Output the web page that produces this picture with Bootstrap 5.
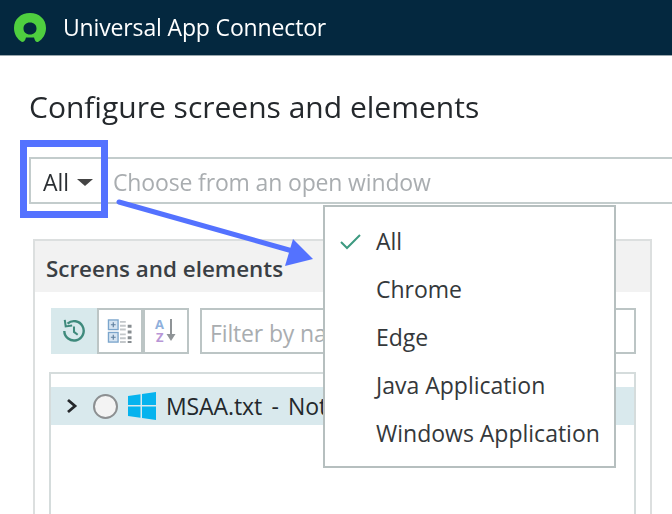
<!DOCTYPE html>
<html lang="en">
<head>
    <meta charset="UTF-8">
    <meta name="viewport" content="width=device-width, initial-scale=1">
    <title>Universal App Connector</title>
    <link href="https://cdn.jsdelivr.net/npm/bootstrap@5.3.0/dist/css/bootstrap.min.css" rel="stylesheet">
    <style>
        html, body {
          height: 514px;
          overflow: hidden;
        }
        body {
          position: relative;
          width: 672px;
          font-family: "Open Sans", "Noto Sans", sans-serif;
          color: #2b2f33;
          background: #fff;
          filter: blur(0.4px);
        }
        .app-bar {
          height: 56px;
          padding: 0 0 0 14px;
          background: #04283f;
          border-bottom: 1px solid #9aa7ad;
          gap: 17px;
        }
        .app-name {
          color: #fff;
          font-size: 23px;
          letter-spacing: -0.15px;
        }
        .app-main {
          padding: 33px 0 0 29px;
          overflow: hidden;
          height: 458px;
        }
        .page-title {
          font-size: 30px;
          font-weight: 400;
          line-height: 36px;
          margin: 0 0 32px;
          color: #24282c;
        }
        .picker {
          width: 660px;
          height: 47px;
          padding-top: 3px;
          border: 2px solid #c3cccc;
        }
        .picker-btn {
          width: 82px;
          flex-shrink: 0;
          padding: 0 0 0 12px;
          gap: 8px;
          font-size: 23px;
          color: #2b2f33;
        }
        .caret-down {
          width: 0;
          height: 0;
          border-left: 8px solid transparent;
          border-right: 8px solid transparent;
          border-top: 7px solid #444;
        }
        .picker-hint {
          font-size: 23px;
          color: #a9adb0;
          letter-spacing: -0.15px;
        }
        .el-panel {
          width: 619px;
          height: 330px;
          margin: 35px 0 0 4px;
          border: 2px solid #dcdfdf;
          border-radius: 0;
        }
        .el-panel .card-header {
          flex: 0 0 51px;
          padding: 4px 11px 0;
          background: #f2f2f2;
          border: 0;
          border-radius: 0;
          font-size: 22.4px;
          font-weight: 600;
          color: #3a3f44;
        }
        .el-panel .card-body {
          padding: 16px 14px 0 16px;
        }
        .tool-btn {
          flex: 0 0 46px;
          height: 46px;
          padding: 0;
          border: 2px solid #bcc5c5;
          border-radius: 0;
          background: #fff;
        }
        .tool-on {
          background: #d8e9ec;
          border-color: #d8e9ec;
        }
        .tool-icon {
          overflow: visible;
        }
        .filter-box {
          height: 46px;
          margin-left: 11px;
          padding: 3px 8px 0;
          border: 2px solid #bcc5c5;
          border-radius: 0;
          font-size: 23px;
          letter-spacing: -0.15px;
        }
        .filter-box::placeholder {
          color: #a9adb0;
        }
        .el-list {
          height: 200px;
          margin: 18px 0 0 -2px;
          padding-top: 13px;
          border: 2px solid #d5dcdc;
          border-bottom: 0;
          border-radius: 0;
        }
        .el-row {
          height: 38px;
          margin: 0;
          padding: 0 0 0 14px;
          background: #d9e9ed;
          border: 0;
          font-size: 23px;
          letter-spacing: -0.1px;
          word-spacing: 3.5px;
          white-space: nowrap;
          color: #23282c;
        }
        .el-radio {
          flex: 0 0 25px;
          height: 25px;
          margin: 0 9px 0 14px;
          background: #f3f3f3;
          border: 2px solid #8c8f91;
          border-radius: 50%;
        }
        .win-logo {
          margin-right: 9px;
        }
        .type-menu {
          position: absolute;
          left: 323px;
          top: 205px;
          width: 293px;
          height: 263px;
          margin: 0;
          padding: 11px 0 0;
          border: 2px solid #b6bfbf;
          border-radius: 0;
        }
        .type-menu .dropdown-item {
          position: relative;
          height: 48px;
          padding: 0 0 0 51px;
          font-size: 23px;
          line-height: 46px;
          color: #34383b;
        }
        .menu-tick {
          position: absolute;
          left: 15px;
          top: 15px;
        }
        .call-box {
          position: absolute;
          left: 20px;
          top: 140px;
          width: 88px;
          height: 78px;
          border: 7px solid #5472ff;
        }
        .call-arrow {
          position: absolute;
          left: 0;
          top: 0;
        }
    </style>
</head>
<body>
<nav class="navbar app-bar d-flex align-items-center justify-content-start flex-nowrap">
    <svg width="32" height="30" viewBox="0 0 32 30">
        <path fill-rule="evenodd" d="M8 29 C3 26 0 21 0 15 C0 6 7 0 16 0 C25 0 32 6 32 15 C32 21 29 26 24 29 C22 29.500 21 28 20 24.500 L12 24.500 C11 28 10 29 8 29 Z M16 9.500 C12 9.500 9.500 12 9.500 15.500 C9.500 19 12 21.500 16 21.500 C20 21.500 22.500 19 22.500 15.500 C22.500 12 20 9.500 16 9.500 Z" fill="#4fce3f"/>
    </svg>
    <span class="app-name">Universal App Connector</span>
</nav>

<div class="app-main">
    <h1 class="page-title">Configure screens and elements</h1>

    <div class="picker d-flex align-items-center">
        <button type="button" class="btn picker-btn d-flex align-items-center border-0 rounded-0">All <span class="caret-down"></span></button>
        <span class="picker-hint text-nowrap">Choose from an open window</span>
    </div>

    <div class="card el-panel">
        <div class="card-header d-flex align-items-center">Screens and elements</div>
        <div class="card-body">
            <div class="d-flex align-items-center">
                <button type="button" class="btn tool-btn tool-on d-flex align-items-center justify-content-center">
                    <svg width="24" height="24" viewBox="0 0 26 26" fill="none" stroke="#3f8a7c" stroke-width="2.600">
                        <path d="M6 5 A10.500 10.500 0 1 1 2.500 13"/>
                        <path d="M3 1 L4 8 L11 7" stroke-width="2.200"/>
                        <path d="M13 8 V14 L17 17" stroke-width="2.200"/>
                    </svg>
                </button>
                <button type="button" class="btn tool-btn d-flex align-items-center justify-content-center">
                    <svg width="26" height="25" viewBox="0 0 26 26">
                        <rect x="1" y="1" width="10" height="10" fill="#d5e4f2" stroke="#7ba5cc" stroke-width="1.400"/>
                        <rect x="1" y="14" width="10" height="10" fill="#d5e4f2" stroke="#7ba5cc" stroke-width="1.400"/>
                        <path d="M3.500 6H8.500M6 3.500V8.500M3.500 19H8.500M6 16.500V21.500" stroke="#5f7f9f" stroke-width="1.200"/>
                        <path d="M13 2h6v2h-6zM13 6h6v2h-6zM13 10h6v2h-6zM13 15h6v2h-6zM13 19h6v2h-6zM13 23h6v2h-6z" fill="#c3c7ca"/>
                        <path d="M21 6h4v3h-4zM21 12h4v3h-4zM21 18h4v3h-4zM21 23h4v2h-4z" fill="#868c90"/>
                    </svg>
                </button>
                <button type="button" class="btn tool-btn d-flex align-items-center justify-content-center">
                    <svg class="tool-icon" width="22" height="26" viewBox="0 0 22 26">
                        <text font-family="Open Sans, sans-serif" font-size="13" font-weight="700"><tspan x="0" y="11" fill="#8fb0dc">A</tspan><tspan x="1" y="24" fill="#b896d6">Z</tspan></text>
                        <path d="M16 1V21" stroke="#8f9497" stroke-width="2"/>
                        <path d="M11.500 16L16 23L20.500 16Z" fill="#8f9497"/>
                    </svg>
                </button>
                <input type="text" class="form-control filter-box" placeholder="Filter by name">
            </div>

            <div class="list-group el-list">
                <div class="list-group-item el-row d-flex align-items-center">
                    <svg width="14" height="16" viewBox="0 0 14 16" fill="none" stroke="#25282b" stroke-width="2.800"><path d="M3 2L10 8L3 14"/></svg>
                    <span class="el-radio"></span>
                    <svg class="win-logo" width="30" height="30" viewBox="0 0 30 30" fill="#06b3ee">
                        <path d="M1 5L13.500 3.200V14H1zM15 3L29 1V14H15zM1 15.500H13.500V26.800L1 25zM15 15.500H29V29L15 27z"/>
                    </svg>
                    <span>MSAA.txt - Notepad</span>
                </div>
            </div>
        </div>
    </div>
</div>

<ul class="dropdown-menu show type-menu">
    <li>
        <a class="dropdown-item" href="#">
            <svg class="menu-tick" width="22" height="18" viewBox="0 0 22 18" fill="none" stroke="#3d9a80" stroke-width="2"><path d="M1 9L7 15L20 2"/></svg>
            All
        </a>
    </li>
    <li><a class="dropdown-item" href="#">Chrome</a></li>
    <li><a class="dropdown-item" href="#">Edge</a></li>
    <li><a class="dropdown-item" href="#">Java Application</a></li>
    <li><a class="dropdown-item" href="#">Windows Application</a></li>
</ul>

<div class="call-box"></div>
<svg class="call-arrow" width="672" height="514" viewBox="0 0 672 514">
    <path d="M119 202L296 252" stroke="#5472ff" stroke-width="5" stroke-linecap="round"/>
    <path d="M293 239L313 259L285 266Z" fill="#5472ff"/>
</svg>

<script src="https://cdn.jsdelivr.net/npm/bootstrap@5.3.0/dist/js/bootstrap.bundle.min.js"></script>
</body>
</html>
